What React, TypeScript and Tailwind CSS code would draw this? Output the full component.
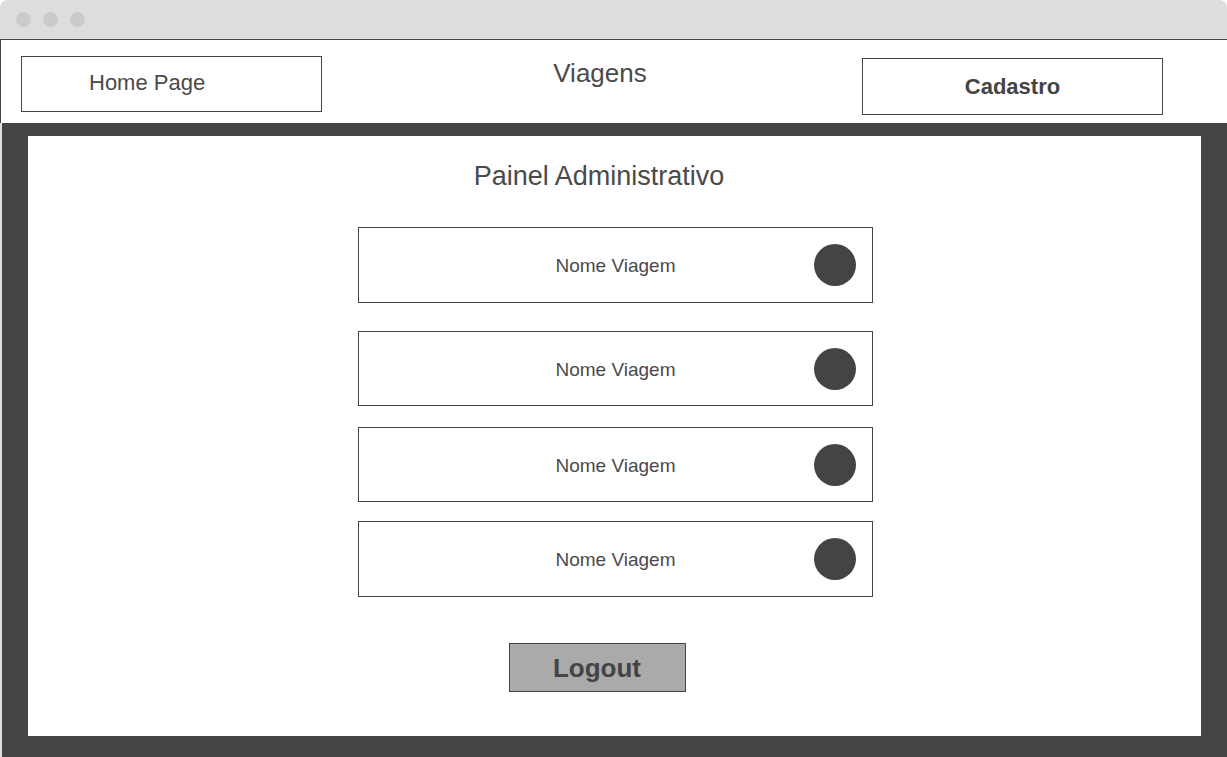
import React from 'react';

const trips = [
  { id: 1, mt: 'mt-[36px]', h: 'h-[76px]' },
  { id: 2, mt: 'mt-[28px]', h: 'h-[75px]' },
  { id: 3, mt: 'mt-[21px]', h: 'h-[75px]' },
  { id: 4, mt: 'mt-[19px]', h: 'h-[76px]' },
];

const TripRow: React.FC<{ mt: string; h: string }> = ({ mt, h }) => (
  <div
    className={`${mt} ${h} ml-[2px] w-[515px] border border-[#444] bg-white flex items-center relative`}
  >
    <span className="flex-1 text-center text-[19px] text-[#4a4a4a] pt-[3px]">Nome Viagem</span>
    {/* status dot */}
    <div className="absolute right-[16px] w-[42px] h-[42px] rounded-full bg-[#444]" />
  </div>
);

export default function App() {
  return (
    <div
      className="w-[1227px] h-[757px] bg-white overflow-hidden flex flex-col"
      style={{ fontFamily: '"Liberation Sans", Arial, sans-serif' }}
    >
      {/* window chrome */}
      <div className="h-[40px] shrink-0 bg-[#dddddd] rounded-t-[8px] border-b border-[#444] flex items-center gap-[12px] pl-[16px]">
        <div className="w-[15px] h-[15px] rounded-full bg-[#cbcbcb]" />
        <div className="w-[15px] h-[15px] rounded-full bg-[#cbcbcb]" />
        <div className="w-[15px] h-[15px] rounded-full bg-[#cbcbcb]" />
      </div>

      {/* top nav */}
      <div className="h-[83px] shrink-0 border-l border-[#444] flex items-start pl-[20px] pr-[64px]">
        <div className="mt-[16px] w-[301px] h-[56px] border border-[#444] flex items-center pl-[67px] text-[22px] text-[#4a4a4a] pb-[3px]">
          Home Page
        </div>
        <div className="flex-1 text-center pl-[16px] pt-[14px] text-[26px] text-[#4a4a4a]">Viagens</div>
        <div className="mt-[18px] w-[301px] h-[57px] border border-[#444] flex items-center justify-center text-[22px] font-bold text-[#444]">
          Cadastro
        </div>
      </div>

      {/* dark frame */}
      <div className="flex-1 bg-[#444] border-l-2 border-[#dedede] pl-[26px] pr-[26px] pt-[13px] pb-[21px] flex">
        <div className="flex-1 bg-white flex flex-col items-center pt-[25px]">
          <h1 className="text-[27px] text-[#4a4a4a] leading-[30px] pr-[31px]">Painel Administrativo</h1>
          {trips.map((t) => (
            <TripRow key={t.id} mt={t.mt} h={t.h} />
          ))}
          <div className="mt-[46px] mr-[35px] w-[177px] h-[49px] bg-[#aaaaaa] border border-[#444] flex items-center justify-center text-[26px] font-bold text-[#444] pt-[1px]">
            Logout
          </div>
        </div>
      </div>
    </div>
  );
}
